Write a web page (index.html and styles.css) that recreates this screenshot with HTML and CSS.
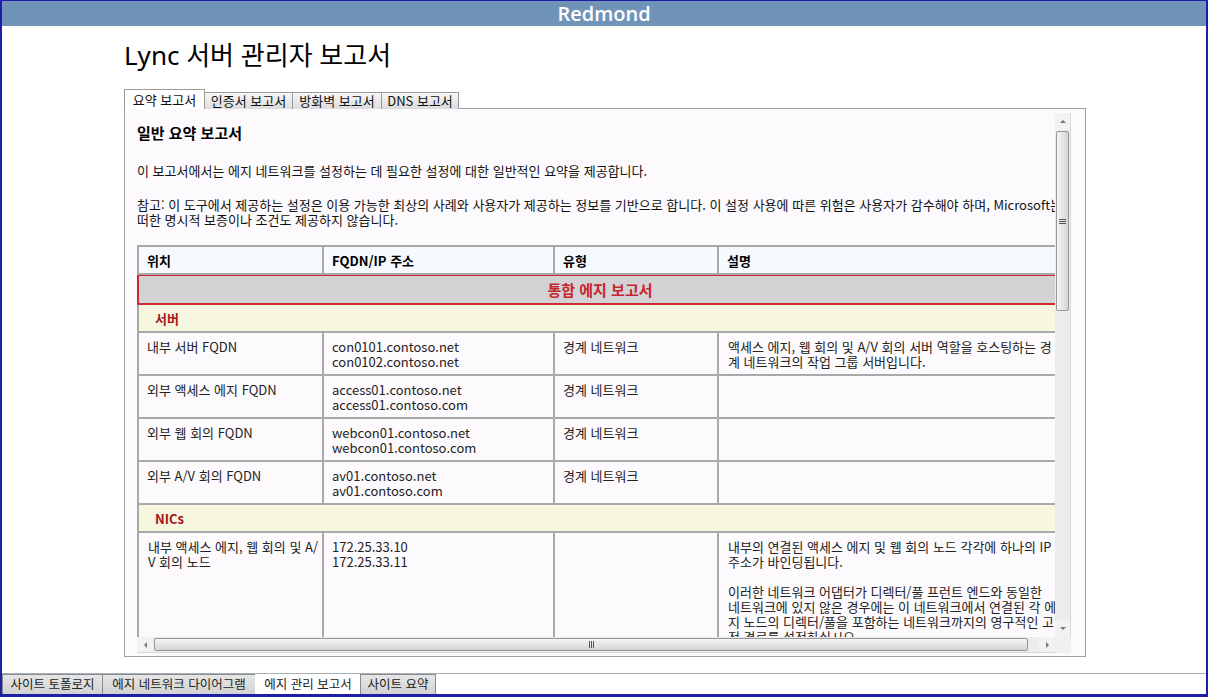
FILE: index.html
```html
<!DOCTYPE html>
<html lang="ko">
<head>
<meta charset="utf-8">
<title>Lync 서버 관리자 보고서</title>
<link rel="stylesheet" href="styles.css">
</head>
<body>
<div class="window">
  <div class="titlebar">Redmond</div>
  <div class="main">
    <h1 class="app-title">Lync 서버 관리자 보고서</h1>
    <div class="tabs">
      <div class="tab active tab-w1">요약 보고서</div>
      <div class="tab tab-w2">인증서 보고서</div>
      <div class="tab tab-w3">방화벽 보고서</div>
      <div class="tab tab-w4">DNS 보고서</div>
    </div>
    <div class="panel">
      <div class="scroller">
        <div class="viewport">
          <div class="doc">
            <h2 class="doc-title">일반 요약 보고서</h2>
            <p class="intro">이 보고서에서는 에지 네트워크를 설정하는 데 필요한 설정에 대한 일반적인 요약을 제공합니다.</p>
            <p class="note">참고: 이 도구에서 제공하는 설정은 이용 가능한 최상의 사례와 사용자가 제공하는 정보를 기반으로 합니다. 이 설정 사용에 따른 위험은 사용자가 감수해야 하며, Microsoft는 어<br>떠한 명시적 보증이나 조건도 제공하지 않습니다.</p>
            <table class="report">
              <colgroup>
                <col class="c1"><col class="c2"><col class="c3"><col class="c4">
              </colgroup>
              <thead>
                <tr><th>위치</th><th>FQDN/IP 주소</th><th>유형</th><th>설명</th></tr>
              </thead>
              <tbody>
                <tr><td class="group" colspan="4">통합 에지 보고서</td></tr>
                <tr><td class="section" colspan="4">서버</td></tr>
                <tr>
                  <td>내부 서버 FQDN</td>
                  <td>con0101.contoso.net<br>con0102.contoso.net</td>
                  <td>경계 네트워크</td>
                  <td class="desc">액세스 에지, 웹 회의 및 A/V 회의 서버 역할을 호스팅하는 경<br>계 네트워크의 작업 그룹 서버입니다.</td>
                </tr>
                <tr>
                  <td>외부 액세스 에지 FQDN</td>
                  <td>access01.contoso.net<br>access01.contoso.com</td>
                  <td>경계 네트워크</td>
                  <td class="desc"></td>
                </tr>
                <tr>
                  <td>외부 웹 회의 FQDN</td>
                  <td>webcon01.contoso.net<br>webcon01.contoso.com</td>
                  <td>경계 네트워크</td>
                  <td class="desc"></td>
                </tr>
                <tr>
                  <td>외부 A/V 회의 FQDN</td>
                  <td>av01.contoso.net<br>av01.contoso.com</td>
                  <td>경계 네트워크</td>
                  <td class="desc"></td>
                </tr>
                <tr><td class="section" colspan="4">NICs</td></tr>
                <tr>
                  <td class="nowrap">내부 액세스 에지, 웹 회의 및 A/<br>V 회의 노드</td>
                  <td>172.25.33.10<br>172.25.33.11</td>
                  <td></td>
                  <td class="desc">내부의 연결된 액세스 에지 및 웹 회의 노드 각각에 하나의 IP<br>주소가 바인딩됩니다.<br><br>이러한 네트워크 어댑터가 디렉터/풀 프런트 엔드와 동일한<br>네트워크에 있지 않은 경우에는 이 네트워크에서 연결된 각 에<br>지 노드의 디렉터/풀을 포함하는 네트워크까지의 영구적인 고<br>정 경로를 설정하십시오.</td>
                </tr>
              </tbody>
            </table>
          </div>
        </div>
        <div class="vscroll">
          <div class="sb-btn"><span class="tri tri-up"></span></div>
          <div class="vtrack"><div class="vthumb"><span class="grip-h"></span></div></div>
          <div class="sb-btn"><span class="tri tri-down"></span></div>
        </div>
        <div class="hscroll">
          <div class="sb-btn"><span class="tri tri-left"></span></div>
          <div class="htrack"><div class="hthumb"><span class="grip-v"></span></div></div>
          <div class="sb-btn"><span class="tri tri-right"></span></div>
        </div>
        <div class="corner"></div>
      </div>
    </div>
  </div>
  <div class="bottom-tabs">
    <div class="btab bw1">사이트 토폴로지</div>
    <div class="btab bw2">에지 네트워크 다이어그램</div>
    <div class="btab active bw3">에지 관리 보고서</div>
    <div class="btab bw4">사이트 요약</div>
  </div>
</div>
</body>
</html>
```

FILE: styles.css
```css
* { box-sizing: border-box; }
html, body { margin: 0; padding: 0; }
body {
  width: 1208px;
  height: 697px;
  overflow: hidden;
  background: #fefffe;
  font-family: "Noto Sans CJK KR", "Noto Sans", sans-serif;
  font-size: 13px;
  color: #000;
}
.window {
  height: 697px;
  display: flex;
  flex-direction: column;
  border-style: solid;
  border-color: #1e1ea8;
  border-width: 1px 2px 3px 2px;
  background: #fefffe;
}
.titlebar {
  flex: none;
  height: 25px;
  background: #7094b8;
  color: #fff;
  text-align: center;
  font: 600 20px/25px "Open Sans", sans-serif;
}
.main {
  flex: 1;
  display: flex;
  flex-direction: column;
  padding-left: 122px;
}
.app-title {
  margin: 14px 0 0;
  font: 400 26px/30px "Noto Sans", "Noto Sans CJK KR", sans-serif;
  color: #000;
}
.tabs {
  display: flex;
  align-items: flex-end;
  height: 20px;
  margin-top: 19px;
  margin-bottom: -1px;
  position: relative;
  z-index: 1;
}
.tab {
  height: 17px;
  margin-left: -1px;
  border: 1px solid #9a9a9a;
  border-bottom: none;
  background: linear-gradient(#f7f7f7, #dcdcdc);
  font-size: 13px;
  line-height: 15px;
  text-align: center;
  color: #111;
}
.tab.active {
  height: 20px;
  margin-left: 0;
  background: #fff;
  line-height: 19px;
}
.tab-w1 { width: 81px; }
.tab-w2 { width: 89px; }
.tab-w3 { width: 90px; }
.tab-w4 { width: 78px; }

.panel {
  width: 962px;
  height: 549px;
  border: 1px solid #a0a0a0;
  background: #fdfafd;
  padding: 4px 14px 3px 12px;
}
.scroller {
  height: 100%;
  display: grid;
  grid-template-columns: 1fr 16px;
  grid-template-rows: 1fr 16px;
}
.viewport {
  overflow: hidden;
  min-width: 0;
  min-height: 0;
}
.doc {
  width: 926px;
  padding-top: 11px;
}
.doc-title {
  margin: 0;
  font-size: 15px;
  line-height: 18px;
  font-weight: bold;
}
.intro, .note {
  margin: 21px 0 0;
  line-height: 15px;
  white-space: nowrap;
  color: #111;
}
.note { margin-top: 19px; }

.report {
  margin-top: 18px;
  width: 926px;
  table-layout: fixed;
  border-collapse: separate;
  border-spacing: 0;
}
.c1 { width: 187px; }
.c2 { width: 231px; }
.c3 { width: 164px; }
.c4 { width: 344px; }
.report th, .report td {
  border-right: 2px solid #a9a9a9;
  border-bottom: 2px solid #a9a9a9;
  padding: 6px 8px 5px 8px;
  vertical-align: top;
  text-align: left;
  line-height: 15px;
  font-size: 13px;
  color: #222;
}
.report tr > :first-child { border-left: 2px solid #a9a9a9; }
.report thead th {
  border-top: 2px solid #a9a9a9;
  background: #f6faff;
  font-weight: bold;
  color: #000;
}
.report td.group {
  background: #d4d2d5;
  border-left: 2px solid #cc2a30;
  border-top: 1px solid #cc2a30;
  border-bottom: 2px solid #cc2a30;
  text-align: center;
  color: #c4262e;
  font-weight: bold;
  font-size: 15px;
  line-height: 17px;
  padding: 5px 8px 5px;
}
.report td.section {
  background: #f7f7df;
  color: #a81818;
  font-weight: bold;
  padding: 6px 8px 5px 16px;
}
.report td.desc, .report td.nowrap {
  white-space: nowrap;
  padding-left: 9px;
}

.vscroll {
  display: flex;
  flex-direction: column;
  background: #ececec;
  border-right: 1px solid #d8d8d8;
}
.hscroll {
  display: flex;
  background: #ececec;
  border-bottom: 1px solid #d8d8d8;
}
.corner { background: #f0f0f0; }
.sb-btn {
  flex: none;
  width: 16px;
  height: 16px;
  display: flex;
  align-items: center;
  justify-content: center;
  background: #f2f2f2;
}
.vscroll .sb-btn { width: 100%; height: 17px; }
.hscroll .sb-btn { height: 100%; width: 16px; }
.tri { width: 0; height: 0; border: 3px solid transparent; }
.tri-up { border-bottom: 3px solid #777; border-top-width: 0; }
.tri-down { border-top: 3px solid #777; border-bottom-width: 0; }
.tri-left { border-right: 3px solid #777; border-left-width: 0; }
.tri-right { border-left: 3px solid #777; border-right-width: 0; }
.vtrack {
  flex: 1;
  padding: 1px 1px 0;
}
.vthumb {
  height: 180px;
  border: 1px solid #979797;
  border-radius: 2px;
  background: linear-gradient(90deg, #f6f6f6, #e2e2e2 60%, #d4d4d4);
  display: flex;
  align-items: center;
  justify-content: center;
}
.grip-h {
  width: 7px;
  height: 5px;
  border-top: 1px solid #555;
  border-bottom: 1px solid #555;
  position: relative;
}
.grip-h::after {
  content: "";
  position: absolute;
  left: 0; right: 0; top: 1px;
  border-top: 1px solid #555;
}
.htrack {
  flex: 1;
  padding: 1px 10px 1px 1px;
}
.hthumb {
  width: 874px;
  height: 100%;
  border: 1px solid #979797;
  border-radius: 2px;
  background: linear-gradient(#f6f6f6, #e2e2e2 60%, #d4d4d4);
  display: flex;
  align-items: center;
  justify-content: center;
}
.grip-v {
  width: 5px;
  height: 7px;
  border-left: 1px solid #555;
  border-right: 1px solid #555;
  position: relative;
}
.grip-v::after {
  content: "";
  position: absolute;
  top: 0; bottom: 0; left: 1px;
  border-left: 1px solid #555;
}

.bottom-tabs {
  flex: none;
  height: 21px;
  display: flex;
  border-top: 1px solid #a7b0b8;
}
.btab {
  height: 20px;
  border: 1px solid #8a8a8a;
  border-bottom: none;
  margin-right: -1px;
  background: linear-gradient(#e6e6e6, #d2d2d2);
  font-size: 12.5px;
  line-height: 18px;
  text-align: center;
  color: #222;
}
.btab.active {
  background: #fff;
  border-color: transparent;
}
.bw1 { width: 101px; }
.bw2 { width: 154px; }
.bw3 { width: 106px; }
.bw4 { width: 76px; }
```
